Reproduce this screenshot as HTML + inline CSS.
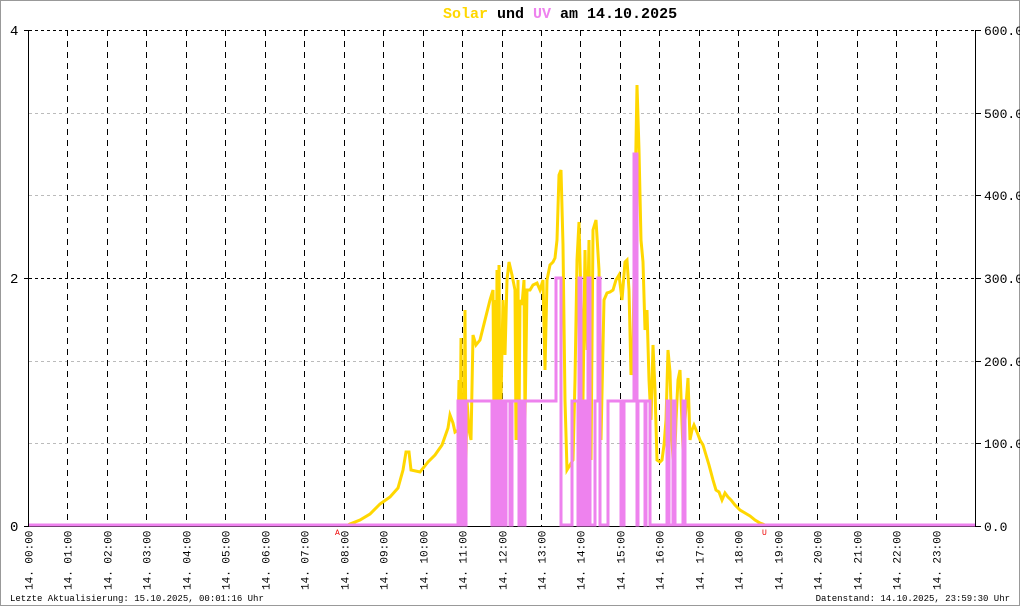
<!DOCTYPE html>
<html><head><meta charset="utf-8"><style>
html,body{margin:0;padding:0;background:#fff;}
svg{display:block;}
text{font-family:"Liberation Mono","DejaVu Sans Mono",monospace;}
</style></head><body>
<svg width="1020" height="606" viewBox="0 0 1020 606" xmlns="http://www.w3.org/2000/svg">
<rect x="0.5" y="0.5" width="1019" height="605" fill="#fff" stroke="#999"/>
<text x="443" y="18" font-size="15" font-weight="bold"><tspan fill="#ffd700">Solar</tspan><tspan fill="#000"> und </tspan><tspan fill="#ee82ee">UV</tspan><tspan fill="#000"> am 14.10.2025</tspan></text>
<g stroke="#bbb" stroke-dasharray="3,3" stroke-width="1">
<line x1="29" y1="113.5" x2="976" y2="113.5"/><line x1="29" y1="195.5" x2="976" y2="195.5"/>
<line x1="29" y1="361.5" x2="976" y2="361.5"/><line x1="29" y1="443.5" x2="976" y2="443.5"/>
</g>
<g stroke="#000" stroke-dasharray="3,3" stroke-width="1">
<line x1="29" y1="30.5" x2="976" y2="30.5"/><line x1="29" y1="278.5" x2="976" y2="278.5"/>
</g>
<g stroke="#000" stroke-dasharray="6,5" stroke-width="1" id="vl"></g>
<line x1="28.5" y1="30" x2="28.5" y2="526" stroke="#000"/>
<line x1="975.5" y1="30" x2="975.5" y2="526" stroke="#000"/>
<line x1="24" y1="30.5" x2="29" y2="30.5" stroke="#000"/><line x1="24" y1="278.5" x2="29" y2="278.5" stroke="#000"/><line x1="24" y1="526.5" x2="29" y2="526.5" stroke="#000"/>
<g stroke="#000"><line x1="975" y1="30.5" x2="981" y2="30.5"/><line x1="975" y1="113.5" x2="981" y2="113.5"/><line x1="975" y1="195.5" x2="981" y2="195.5"/><line x1="975" y1="278.5" x2="981" y2="278.5"/><line x1="975" y1="361.5" x2="981" y2="361.5"/><line x1="975" y1="443.5" x2="981" y2="443.5"/><line x1="975" y1="526.5" x2="981" y2="526.5"/></g>
<g font-size="14" fill="#000"><text x="10" y="35">4</text><text x="10" y="283">2</text><text x="10" y="531">0</text></g>
<g font-size="13" fill="#000"><text x="984" y="35">600.0</text><text x="984" y="118">500.0</text><text x="984" y="200">400.0</text><text x="984" y="283">300.0</text><text x="984" y="366">200.0</text><text x="984" y="448">100.0</text><text x="984" y="531">0.0</text></g>
<line x1="29" y1="526.5" x2="975" y2="526.5" stroke="#000"/>
<polyline fill="none" stroke="#ffd700" stroke-width="3" stroke-linejoin="miter" points="29,525 348,525 350,524 360,520 370,514 380,504 390,497 398,488 403,470 406,452 409,452 411,470 420,472 428,462 435,455 442,445 448,428 450,415 453,423 455,432 458,430 459,380 460,470 461,338 462,470 463,395 464,460 465,310 466,460 467,400 469,430 471,440 473,335 476,345 480,340 485,320 490,300 493,290 494,420 495,300 496,440 497,270 498,440 499,265 500,420 501,400 503,300 505,355 507,280 509,262 512,275 515,290 516,440 518,280 519,430 520,300 522,305 524,280 525,420 527,290 530,290 533,285 537,283 540,290 543,280 545,370 547,280 550,265 553,262 555,258 557,240 559,175 561,170 563,245 565,400 567,470 570,465 573,460 575,380 577,260 579,222 581,300 583,400 585,250 587,350 589,240 591,460 593,230 596,220 599,270 601,440 604,300 607,293 610,292 613,290 616,280 619,275 622,300 625,262 627,260 629,290 631,375 633,350 635,200 637,85 639,150 641,240 643,262 645,330 647,310 649,380 651,420 653,345 655,390 657,460 660,462 662,460 664,445 666,420 668,350 670,372 672,440 674,480 676,420 678,380 680,370 683,450 685,420 688,378 690,440 692,430 694,425 697,432 700,440 703,445 706,455 709,465 713,480 716,490 719,492 722,500 725,493 728,497 731,500 735,505 740,510 745,513 750,516 755,520 760,523 765,525 975,525"/>
<path fill="none" stroke="#ee82ee" stroke-width="3" d="M29,525 H458 V401 H460 V525 H462 V401 H464 V525 H466 V401 H492 V525 H494 V401 H496 V525 H498 V401 H500 V525 H502 V401 H504 V525 H506 V401 H510 V525 H512 V401 H519 V525 H521 V401 H523 V525 H525 V401 H556 V278 H561 V525 H572 V401 H578 V525 H579 V278 H581 V525 H583 V401 H585 V525 H588 V278 H590 V525 H595 V401 H598 V278 H600 V525 H608 V401 H621 V525 H624 V401 H634 V154 H637 V525 H638 V401 H645 V525 H646 V401 H650 V525 H667 V401 H669 V525 H673 V401 H675 V525 H683 V401 H685 V525 H975"/>
<text x="335" y="535" font-size="8" fill="#e00">A</text>
<text x="762" y="535" font-size="8" fill="#e00">U</text>
<g id="hl" font-size="11" fill="#000"></g>
<text x="10" y="601" font-size="9" fill="#000">Letzte Aktualisierung: 15.10.2025, 00:01:16 Uhr</text>
<text x="1010" y="601" font-size="9" fill="#000" text-anchor="end">Datenstand: 14.10.2025, 23:59:30 Uhr</text>
<script>
var ns="http://www.w3.org/2000/svg",vl=document.getElementById("vl"),hl=document.getElementById("hl");
for(var i=0;i<24;i++){var x=Math.round(28+i*39.46)+0.5;
if(i>0){var l=document.createElementNS(ns,"line");l.setAttribute("x1",x);l.setAttribute("x2",x);l.setAttribute("y1",30);l.setAttribute("y2",526);vl.appendChild(l);}
var t=document.createElementNS(ns,"text");t.setAttribute("transform","translate("+(x+4)+",590) rotate(-90)");t.textContent="14. "+(i<10?"0":"")+i+":00";hl.appendChild(t);}
</script>
</svg>
</body></html>
